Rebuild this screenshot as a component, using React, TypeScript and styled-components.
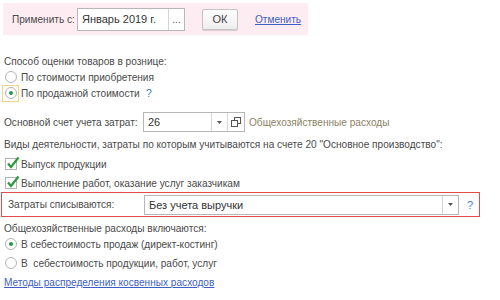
import styled, { createGlobalStyle } from "styled-components";

const GlobalStyle = createGlobalStyle`
  html, body {
    margin: 0;
    padding: 0;
    background: #ffffff;
  }
  body {
    font-family: "Liberation Sans", Arial, sans-serif;
    font-size: 10.1px;
    color: #4a4a4a;
  }
`;

const Page = styled.div`
  width: 500px;
  height: 300px;
  overflow: hidden;
  display: flex;
  flex-direction: column;
`;

// розовая панель сверху
const ApplyBar = styled.div`
  margin: 3px 0 0 3px;
  width: 305px;
  height: 32px;
  background: #fdedf2;
  display: flex;
  align-items: center;
  padding-left: 9px;
  box-sizing: border-box;
`;

const Label = styled.span<{ $width?: number }>`
  white-space: nowrap;
  ${(p) => (p.$width ? `width: ${p.$width}px; flex: none;` : "")}
`;

const Field = styled.div<{ $width: number; $height?: number }>`
  display: flex;
  height: ${(p) => p.$height ?? 20}px;
  width: ${(p) => p.$width}px;
  border: 1px solid #b7b7b7;
  background: #fff;
  box-sizing: border-box;
  flex: none;
`;

const FieldText = styled.div`
  flex: 1;
  padding-left: 4px;
  display: flex;
  align-items: center;
  color: #333;
  font-size: 11px;
  white-space: nowrap;
`;

const FieldButton = styled.div<{ $width?: number }>`
  width: ${(p) => p.$width ?? 15}px;
  flex: none;
  border-left: 1px solid #d5d5d5;
  display: flex;
  align-items: center;
  justify-content: center;
  color: #555;
  font-size: 10px;
`;

const Button = styled.div`
  margin-left: 17px;
  width: 36px;
  height: 21px;
  box-sizing: border-box;
  border: 1px solid #c4c4c4;
  border-radius: 2px;
  background: linear-gradient(#ffffff, #ededed);
  box-shadow: 0 1px 1px rgba(0, 0, 0, 0.15);
  display: flex;
  align-items: center;
  justify-content: center;
  color: #444;
  font-size: 11px;
`;

const Link = styled.a`
  color: #3d5fc4;
  text-decoration: underline;
  white-space: nowrap;
`;

const Content = styled.div`
  padding-left: 4px;
  display: flex;
  flex-direction: column;
`;

const Row = styled.div<{ $h: number }>`
  height: ${(p) => p.$h}px;
  display: flex;
  align-items: center;
  white-space: nowrap;
`;

const Highlight = styled.div`
  margin: 0 0 0 -3px;
  width: 479px;
  height: 25px;
  border: 1px solid #e54a4a;
  box-sizing: border-box;
  display: flex;
  align-items: center;
  padding-left: 6px;
`;

const RadioWrap = styled.div<{ $focus?: boolean }>`
  width: 17px;
  height: 17px;
  margin-left: -2px;
  margin-right: 2px;
  box-sizing: border-box;
  border: 1px solid ${(p) => (p.$focus ? "#f0d77a" : "transparent")};
  display: flex;
  align-items: center;
  justify-content: center;
`;

const Radio = styled.div<{ $on?: boolean }>`
  width: 12px;
  height: 12px;
  border-radius: 50%;
  border: 1px solid #b3b3b3;
  box-sizing: border-box;
  background: #fff;
  display: flex;
  align-items: center;
  justify-content: center;
  &::after {
    content: "";
    width: 4px;
    height: 4px;
    border-radius: 50%;
    background: ${(p) => (p.$on ? "#1e9b45" : "transparent")};
  }
`;

const Check = styled.div`
  width: 12px;
  height: 12px;
  border: 1px solid #b3b3b3;
  box-sizing: border-box;
  background: #fff;
  margin-left: 1px;
  margin-right: 4px;
  position: relative;
  svg {
    position: absolute;
    left: 0px;
    top: -3px;
  }
`;

const Help = styled.span`
  color: #3d7fd0;
  margin-left: 6px;
  font-size: 11px;
`;

const Note = styled.span`
  color: #8b8265;
  margin-left: 4px;
`;

function Checkmark() {
  return (
    <svg width="14" height="14" viewBox="0 0 14 14">
      <path d="M2 7.5 L5 11 L12.5 1.5" fill="none" stroke="#2a9a3a" strokeWidth="2.2" />
    </svg>
  );
}

function CopyIcon() {
  return (
    <svg width="10" height="10" viewBox="0 0 10 10">
      <rect x="3.5" y="0.5" width="6" height="6" fill="none" stroke="#555" />
      <rect x="0.5" y="3.5" width="6" height="6" fill="#fff" stroke="#555" />
    </svg>
  );
}

function Arrow() {
  return (
    <svg width="5" height="3" viewBox="0 0 5 3">
      <path d="M0 0 H5 L2.5 3 Z" fill="#555" />
    </svg>
  );
}

export default function App() {
  return (
    <Page>
      <GlobalStyle />
      <ApplyBar>
        <Label $width={65}>Применить с:</Label>
        <Field $width={108} $height={23}>
          <FieldText>Январь 2019 г.</FieldText>
          <FieldButton>...</FieldButton>
        </Field>
        <Button>ОК</Button>
        <Link style={{ marginLeft: 17 }}>Отменить</Link>
      </ApplyBar>
      <Content>
        <Row $h={16} style={{ marginTop: 18 }}>Способ оценки товаров в рознице:</Row>
        <Row $h={16}>
          <RadioWrap>
            <Radio />
          </RadioWrap>
          По стоимости приобретения
        </Row>
        <Row $h={16}>
          <RadioWrap $focus>
            <Radio $on />
          </RadioWrap>
          По продажной стоимости
          <Help>?</Help>
        </Row>
        <Row $h={22} style={{ marginTop: 10 }}>
          <Label $width={139}>Основной счет учета затрат:</Label>
          <Field $width={102}>
            <FieldText>26</FieldText>
            <FieldButton>
              <Arrow />
            </FieldButton>
            <FieldButton $width={16}>
              <CopyIcon />
            </FieldButton>
          </Field>
          <Note>Общехозяйственные расходы</Note>
        </Row>
        <Row $h={18} style={{ marginTop: 2 }}>
          Виды деятельности, затраты по которым учитываются на счете 20 "Основное производство":
        </Row>
        <Row $h={18} style={{ marginTop: 2 }}>
          <Check>
            <Checkmark />
          </Check>
          Выпуск продукции
        </Row>
        <Row $h={18} style={{ marginTop: 1 }}>
          <Check>
            <Checkmark />
          </Check>
          Выполнение работ, оказание услуг заказчикам
        </Row>
        <Highlight>
          <Label $width={136}>Затраты списываются:</Label>
          <Field $width={315}>
            <FieldText>Без учета выручки</FieldText>
            <FieldButton>
              <Arrow />
            </FieldButton>
          </Field>
          <Help style={{ marginLeft: 8 }}>?</Help>
        </Highlight>
        <Row $h={16} style={{ marginTop: 3 }}>Общехозяйственные расходы включаются:</Row>
        <Row $h={16}>
          <RadioWrap>
            <Radio $on />
          </RadioWrap>
          В себестоимость продаж (директ-костинг)
        </Row>
        <Row $h={20} style={{ marginTop: 1 }}>
          <RadioWrap>
            <Radio />
          </RadioWrap>
          В&nbsp; себестоимость продукции, работ, услуг
        </Row>
        <Row $h={19}>
          <Link>Методы распределения косвенных расходов</Link>
        </Row>
      </Content>
    </Page>
  );
}
